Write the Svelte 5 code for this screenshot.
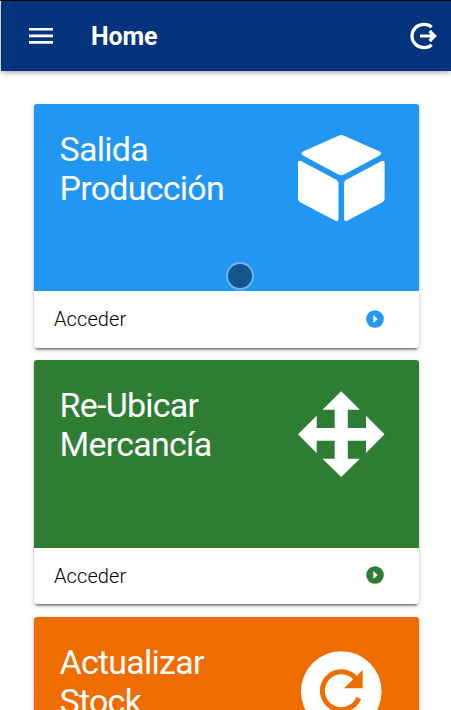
<script lang="ts">
	type Card = {
		title: string[];
		icon: 'cube' | 'move' | 'refresh';
		tone: 'blue' | 'green' | 'orange';
	};

	const cards: Card[] = [
		{ title: ['Salida', 'Producción'], icon: 'cube', tone: 'blue' },
		{ title: ['Re-Ubicar', 'Mercancía'], icon: 'move', tone: 'green' },
		{ title: ['Actualizar', 'Stock'], icon: 'refresh', tone: 'orange' }
	];
</script>

<div class="app">
	<header>
		<button aria-label="Menu">
			<svg width="24" height="16" viewBox="0 0 24 16">
				<path d="M0 0h24v2.6H0zM0 6.6h24v2.6H0zM0 13.1h24v2.6H0z" />
			</svg>
		</button>
		<h1>Home</h1>
		<button class="logout" aria-label="Salir">
			<svg width="28" height="28" viewBox="0 0 28 28">
				<path
					class="line"
					d="M21.6 5.2C19.6 3.2 16.8 2.4 14 2.4C7.2 2.4 2 7.4 2 14S7.2 25.6 14 25.6C16.8 25.6 19.6 24.8 21.6 22.8M10 14H24.6M19.6 9L24.6 14L19.6 19"
				/>
			</svg>
		</button>
	</header>

	<main>
		{#each cards as card}
			<section class="card {card.tone}">
				<div class="hero">
					<h2>{card.title[0]}<br />{card.title[1]}</h2>
					<svg class="icon" width="88" height="88" viewBox="0 0 88 88">
						{#if card.icon === 'cube'}
							<path
								d="M41.5 1.7Q44.3 .3 47.1 1.7L82.6 17.6Q86 19.5 82.6 21.4L47.1 40.6Q44.3 42 41.5 40.6L6 21.4Q2.6 19.5 6 17.6Z"
							/>
							<path
								d="M4.8 27.4L39.3 45.8Q41.5 47.1 41.5 49.4V85Q41.5 88 38.5 86.8L3.2 68.2Q1 67 1 64.8V29Q1 25.6 4.8 27.4Z"
							/>
							<path
								d="M83.8 27.4L49.3 45.8Q47.1 47.1 47.1 49.4V85Q47.1 88 50.1 86.8L85.4 68.2Q87.6 67 87.6 64.8V29Q87.6 25.6 83.8 27.4Z"
							/>
						{:else if card.icon === 'move'}
							<path
								d="M44.2 1.2L62.9 19.8H50.8V38H69V25.8L87.5 44.3L69 63V50.7H50.8V68.8H62.9L44.2 87L25.5 68.8H37.7V50.7H19.7V63L1 44.3L19.7 25.8V38H37.7V19.8H25.5Z"
							/>
						{:else}
							<circle cx="44.3" cy="44.5" r="40.3" />
							<path class="ring" d="M58.8 31.6A18.9 18.9 0 1 0 61.8 51" />
							<path class="cut" d="M65.7 23V41.2H47Z" />
						{/if}
					</svg>
				</div>
				<div class="action">
					<span>Acceder</span>
					<svg width="18" height="18" viewBox="0 0 18 18">
						<circle cx="9" cy="9" r="8.8" />
						<path d="M7.3 5V13L11.7 9Z" />
					</svg>
				</div>
			</section>
		{/each}
	</main>
	<div class="touch"></div>
</div>

<style>
	:global(body) {
		background: #fff;
		overflow: hidden;
	}
	.app {
		box-sizing: border-box;
		height: 710px;
		overflow: hidden;
		padding-left: 1px;
		border-top: 1px solid #000;
		font-family: Roboto, sans-serif;
	}
	header {
		display: flex;
		align-items: center;
		height: 70px;
		box-sizing: border-box;
		padding: 0 13px 0 28px;
		background: #03337c;
		box-shadow: 0 1px 6px rgba(0, 0, 0, 0.4);
	}
	button {
		display: flex;
		padding: 0;
		border: 0;
		background: none;
	}
	header svg {
		fill: #fff;
	}
	.logout {
		margin-left: auto;
	}
	.line {
		fill: none;
		stroke: #fff;
		stroke-width: 3.2;
	}
	h1 {
		margin: 0 0 0 38px;
		color: #fff;
		font-size: 25px;
		font-weight: 700;
		letter-spacing: -0.1px;
	}
	main {
		display: flex;
		flex-direction: column;
		gap: 12.5px;
		padding: 33px 32px 0 33px;
	}
	.card {
		flex: none;
		border-radius: 3px;
		overflow: hidden;
		background: #fff;
		box-shadow:
			0 4px 2px -2px rgba(0, 0, 0, 0.3),
			0 1px 2px rgba(0, 0, 0, 0.2),
			0 2px 6px rgba(0, 0, 0, 0.15);
	}
	.blue {
		--tone: #2196f3;
	}
	.green {
		--tone: #2e7d32;
	}
	.orange {
		--tone: #ef6c00;
	}
	.hero {
		display: flex;
		justify-content: space-between;
		box-sizing: border-box;
		height: 187.3px;
		padding: 26px 34px 0 25.5px;
		background: var(--tone);
	}
	h2 {
		margin: 0;
		color: #fff;
		font-size: 34px;
		font-weight: 400;
		line-height: 39px;
		letter-spacing: -0.75px;
	}
	.icon {
		margin-top: 4px;
		fill: #fff;
	}
	.ring {
		fill: none;
		stroke: var(--tone);
		stroke-width: 5;
	}
	.cut {
		fill: var(--tone);
	}
	.action {
		display: flex;
		align-items: center;
		justify-content: space-between;
		box-sizing: border-box;
		height: 56.7px;
		padding: 0 35px 2px 20px;
		color: #000;
		font-size: 20px;
		font-weight: 350;
		letter-spacing: 0.1px;
	}
	.action span {
		margin-top: 1px;
	}
	.action circle {
		fill: var(--tone);
	}
	.action path {
		fill: #fff;
	}
	.touch {
		position: absolute;
		top: 262px;
		left: 226px;
		box-sizing: border-box;
		width: 28px;
		height: 28px;
		border: 2px solid #6bb6f6;
		border-radius: 50%;
		background: #14558b;
	}
</style>
